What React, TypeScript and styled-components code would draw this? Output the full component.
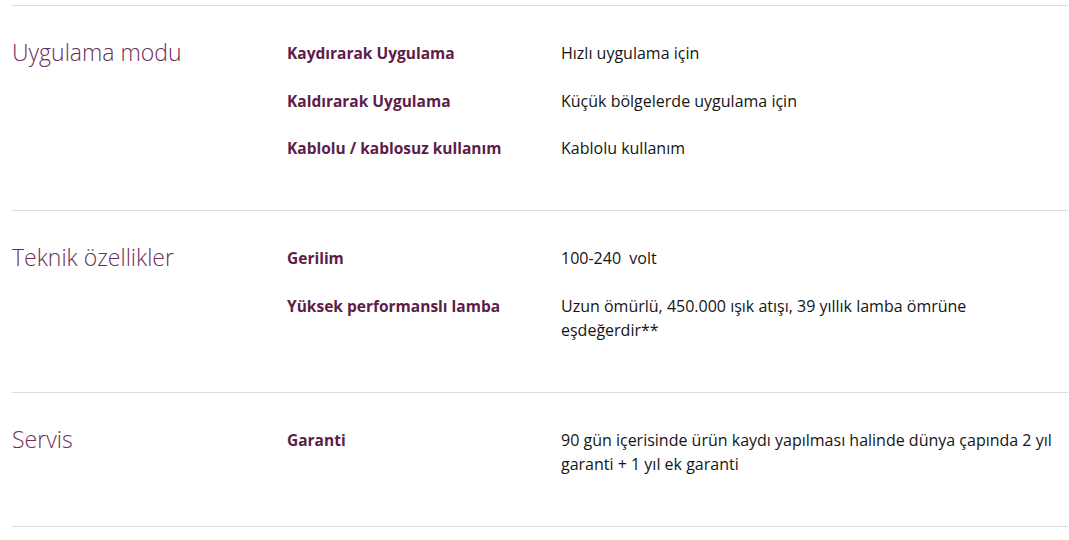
import styled, { createGlobalStyle } from 'styled-components';

const GlobalStyle = createGlobalStyle`
    html, body {
        margin: 0;
        padding: 0;
        background: #fff;
    }
    body {
        font-family: 'Open Sans', 'Noto Sans', sans-serif;
    }
`;

type Row = { label: string; value: string };
type Section = { title: string; rows: Row[] };

const sections: Section[] = [
    {
        title: 'Uygulama modu',
        rows: [
            { label: 'Kaydırarak Uygulama', value: 'Hızlı uygulama için' },
            { label: 'Kaldırarak Uygulama', value: 'Küçük bölgelerde uygulama için' },
            { label: 'Kablolu / kablosuz kullanım', value: 'Kablolu kullanım' },
        ],
    },
    {
        title: 'Teknik özellikler',
        rows: [
            { label: 'Gerilim', value: '100-240\u00a0 volt' },
            {
                label: 'Yüksek performanslı lamba',
                value: 'Uzun ömürlü, 450.000 ışık atışı, 39 yıllık lamba ömrüne eşdeğerdir**',
            },
        ],
    },
    {
        title: 'Servis',
        rows: [
            {
                label: 'Garanti',
                value: '90 gün içerisinde ürün kaydı yapılması halinde dünya çapında 2 yıl garanti + 1 yıl ek garanti',
            },
        ],
    },
];

export default function App() {
    return (
        <>
            <GlobalStyle />
            <Specs>
                {sections.map((section) => (
                    <SpecSection key={section.title}>
                        <Title>{section.title}</Title>
                        <Rows>
                            {section.rows.map((row) => (
                                <SpecRow key={row.label}>
                                    <Label>{row.label}</Label>
                                    <Value>{row.value}</Value>
                                </SpecRow>
                            ))}
                        </Rows>
                    </SpecSection>
                ))}
            </Specs>
        </>
    );
}

const Specs = styled.div`
    padding: 5px 1px 0 12px;
`;

const SpecSection = styled.section`
    display: grid;
    grid-template-columns: 275px 1fr;
    border-top: 1px solid #dcdcdc;
    padding: 35px 0 50px;

    &:last-child {
        border-bottom: 1px solid #dcdcdc;
    }
`;

const Title = styled.h3`
    margin: 0;
    font-size: 23px;
    font-weight: 300;
    line-height: 30px;
    margin-top: -4px;
    color: #6a2f57;
`;

const Rows = styled.div`
    display: flex;
    flex-direction: column;
    gap: 23.5px;
`;

const SpecRow = styled.div`
    display: grid;
    grid-template-columns: 274px 500px;
    line-height: 24px;
`;

const Label = styled.div`
    font-size: 15.5px;
    font-weight: 700;
    color: #5c1d48;
`;

const Value = styled.div`
    font-size: 16px;
    color: #151515;
`;
